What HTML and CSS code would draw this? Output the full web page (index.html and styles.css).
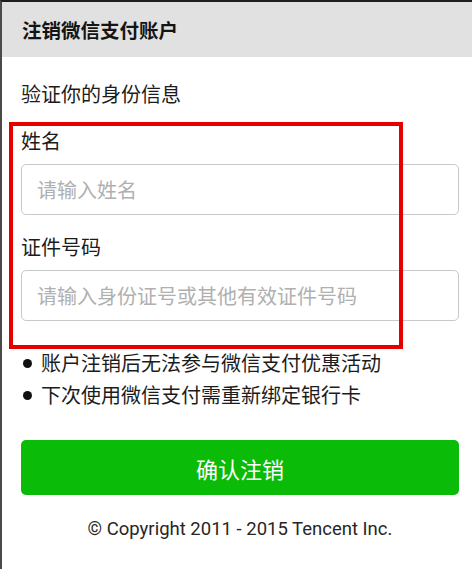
FILE: index.html
```html
<!DOCTYPE html>
<html lang="zh-CN">
<head>
<meta charset="utf-8">
<title>注销微信支付账户</title>
<link rel="stylesheet" href="styles.css">
</head>
<body>
<div class="screen">
  <header class="topbar">注销微信支付账户</header>
  <main class="content">
    <h2 class="section-title">验证你的身份信息</h2>
    <div class="field">
      <label class="field-label">姓名</label>
      <input class="field-input" type="text" placeholder="请输入姓名">
    </div>
    <div class="field">
      <label class="field-label">证件号码</label>
      <input class="field-input" type="text" placeholder="请输入身份证号或其他有效证件号码">
    </div>
    <ul class="notes">
      <li>账户注销后无法参与微信支付优惠活动</li>
      <li>下次使用微信支付需重新绑定银行卡</li>
    </ul>
    <button class="confirm-btn" type="button">确认注销</button>
    <p class="copyright">© Copyright 2011 - 2015 Tencent Inc.</p>
  </main>
  <div class="highlight-box"></div>
</div>
</body>
</html>
```

FILE: styles.css
```css
html, body {
  margin: 0;
  padding: 0;
  background: #ffffff;
}

body {
  font-family: "Noto Sans CJK SC", "Noto Sans", sans-serif;
  color: #1c1c1c;
}

.screen {
  position: relative;
  width: 472px;
  height: 569px;
  box-sizing: border-box;
  border-top: 2px solid #1e1e1e;
  border-left: 2px solid #4a4a4a;
  overflow: hidden;
  background: #ffffff;
}

.topbar {
  height: 55px;
  line-height: 55px;
  background: #e1e1e1;
  padding-left: 20px;
  font-size: 19.5px;
  font-weight: 700;
  color: #141414;
}

.content {
  padding: 0 13px 0 19px;
}

.section-title {
  margin: 22px 0 0;
  font-size: 20px;
  font-weight: 400;
  line-height: 30px;
  color: #1c1c1c;
}

.field {
  margin-top: 17px;
}

.field-label {
  display: block;
  font-size: 20px;
  line-height: 30px;
  margin-bottom: 8px;
  color: #1c1c1c;
}

.field-input {
  display: block;
  width: 100%;
  height: 51px;
  box-sizing: border-box;
  border: 1px solid #c9c9c9;
  border-radius: 5px;
  padding: 0 15px;
  font-family: "Noto Sans CJK SC", "Noto Sans", sans-serif;
  font-size: 20px;
  color: #222;
  background: #fff;
  outline: none;
}

.field-input::placeholder {
  color: #b0b0b0;
}

.notes {
  list-style: none;
  margin: 26px 0 0;
  padding: 0;
}

.notes li {
  display: flex;
  align-items: center;
  height: 32px;
  line-height: 32px;
  font-size: 20px;
  color: #1c1c1c;
}

.notes li::before {
  content: "";
  width: 9px;
  height: 9px;
  border-radius: 50%;
  background: #111;
  margin: 0 9px 0 2px;
  flex: none;
}

.confirm-btn {
  display: block;
  width: 100%;
  height: 55px;
  margin-top: 29px;
  border: none;
  border-radius: 5px;
  background: #0abb07;
  color: #ffffff;
  font-family: "Noto Sans CJK SC", "Noto Sans", sans-serif;
  font-size: 22px;
  cursor: pointer;
}

.copyright {
  margin: 22px 0 0;
  text-align: center;
  font-family: Roboto, "Noto Sans", sans-serif;
  font-size: 18.5px;
  line-height: 24px;
  color: #262626;
}

.highlight-box {
  position: absolute;
  left: 7px;
  top: 120px;
  width: 394px;
  height: 227px;
  box-sizing: border-box;
  border: 4px solid #e50000;
}
```
